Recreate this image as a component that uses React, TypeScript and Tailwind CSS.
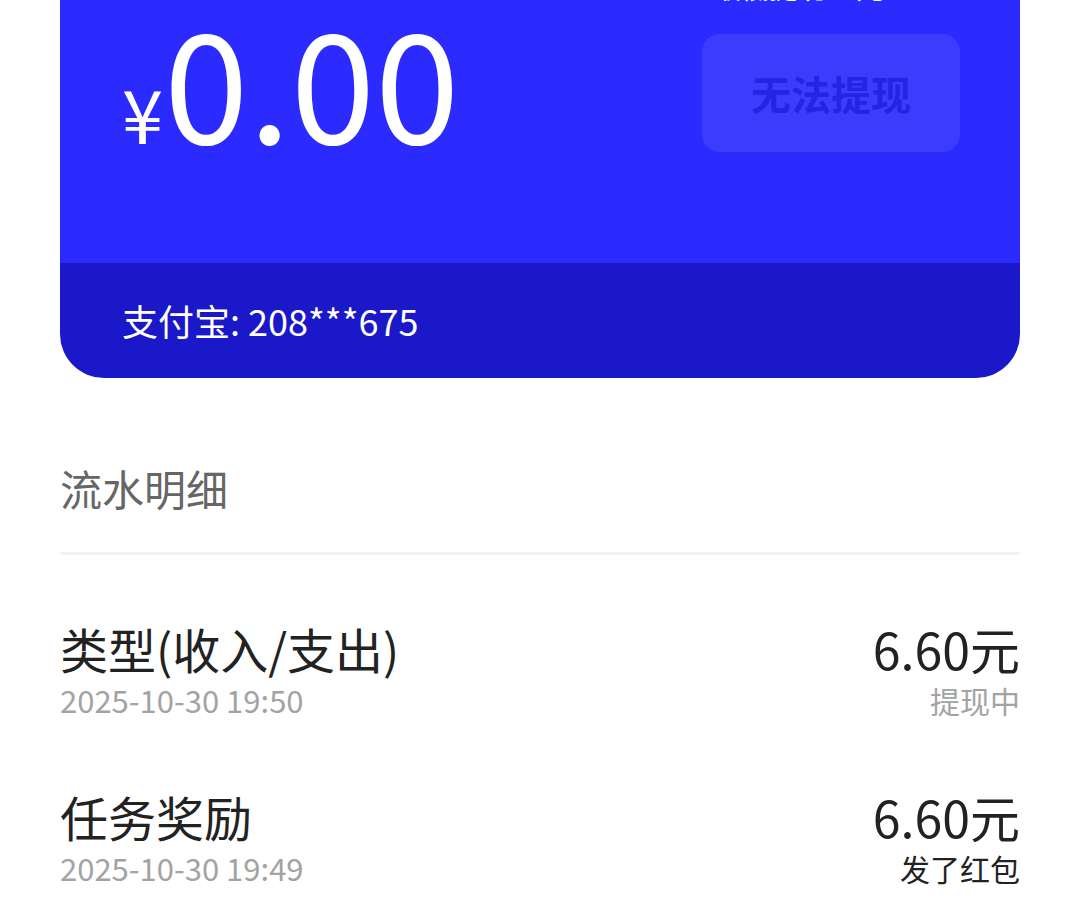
const FONT = { fontFamily: '"Noto Sans CJK SC", "Noto Sans", sans-serif' };

type Row = { title: string; time: string; amount: string; status: string; statusDark: boolean };

const ROWS: Row[] = [
  { title: "类型(收入/支出)", time: "2025-10-30 19:50", amount: "6.60元", status: "提现中", statusDark: false },
  { title: "任务奖励", time: "2025-10-30 19:49", amount: "6.60元", status: "发了红包", statusDark: true },
];

export default function App() {
  return (
    <div className="min-h-screen w-full overflow-hidden bg-white font-['Noto_Sans_CJK_SC',sans-serif]" style={FONT}>
      {/* Balance card (top is scrolled out of view) */}
      <div className="mx-auto w-[960px] overflow-hidden rounded-b-[44px]">
        <div className="flex h-[263px] justify-between bg-[#2b2bff] pl-[62px] pr-[60px]">
          <div className="flex items-baseline pt-[2px] text-white">
            <span className="text-[74px] leading-none">¥</span>
            <span className="ml-[1px] text-[152px] leading-none">0.00</span>
          </div>
          <div className="flex w-[258px] flex-col">
            <p className="-mt-[30px] ml-[11px] h-[34px] whitespace-nowrap text-[28px] leading-[34px] text-white">
              最低提现10元
            </p>
            <button className="mt-[30px] flex h-[118px] w-[258px] items-center justify-center rounded-[18px] bg-[#3c3cff] text-[40px] font-bold text-[#2424e2]">
              无法提现
            </button>
          </div>
        </div>
        <div className="flex h-[115px] items-center bg-[#1a18c8] pl-[62px] pb-[2px] text-[36px] leading-none text-white">
          支付宝: 208***675
        </div>
      </div>

      {/* Transaction list */}
      <div className="mx-auto w-[960px]">
        <div className="pt-[82px] pb-[36px] text-[42px] leading-[56px] text-[#666666]">流水明细</div>
        <div className="h-[3px] bg-[#f2f2f2]" />
        {ROWS.map((r) => (
          <div key={r.time} className="pt-[65px] pb-[3px]">
            <div className="flex items-center justify-between">
              <span className="text-[48px] leading-[56px] text-[#222222]">{r.title}</span>
              <span className="text-[50px] leading-[56px] text-[#222222]">{r.amount}</span>
            </div>
            <div className="mt-[4px] flex items-center justify-between">
              <span className="text-[31px] leading-[40px] text-[#a3a3a3]">{r.time}</span>
              <span className={`text-[30px] leading-[40px] ${r.statusDark ? "text-[#222222]" : "text-[#a3a3a3]"}`}>
                {r.status}
              </span>
            </div>
          </div>
        ))}
      </div>
    </div>
  );
}
